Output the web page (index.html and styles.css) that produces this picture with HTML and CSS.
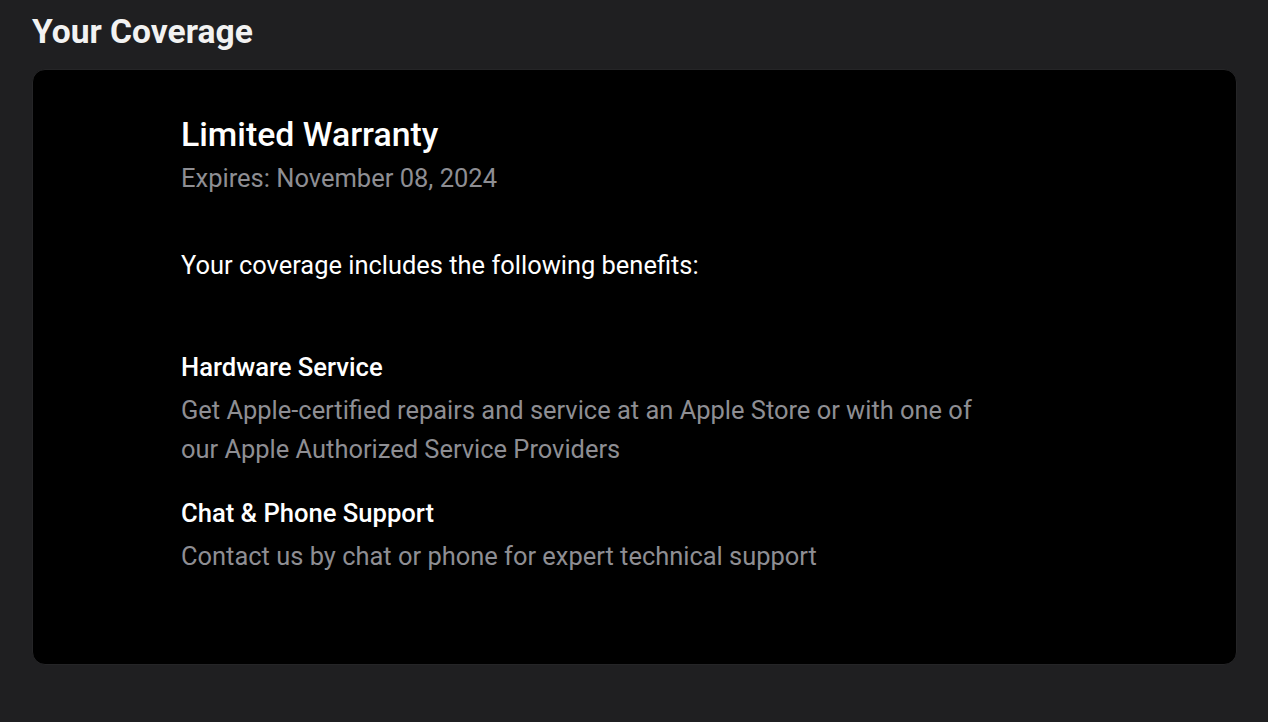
FILE: index.html
```html
<!DOCTYPE html>
<html lang="en">
<head>
<meta charset="utf-8">
<title>Your Coverage</title>
<link rel="stylesheet" href="styles.css">
</head>
<body>
<main class="page">
  <h1 class="page-title">Your Coverage</h1>
  <section class="card">
    <h2 class="plan-name">Limited Warranty</h2>
    <p class="plan-expiry">Expires: November 08, 2024</p>
    <p class="intro">Your coverage includes the following benefits:</p>
    <div class="benefits">
      <div class="benefit">
        <h3 class="benefit-title">Hardware Service</h3>
        <p class="benefit-desc">Get Apple-certified repairs and service at an Apple Store or with one of our Apple Authorized Service Providers</p>
      </div>
      <div class="benefit">
        <h3 class="benefit-title">Chat &amp; Phone Support</h3>
        <p class="benefit-desc">Contact us by chat or phone for expert technical support</p>
      </div>
    </div>
  </section>
</main>
</body>
</html>
```
FILE: styles.css
```css
html, body {
  margin: 0;
  padding: 0;
  background: #1f1f21;
}
body {
  font-family: Roboto, "Liberation Sans", sans-serif;
  color: #ffffff;
}
.page {
  padding: 12px 31px 0 32px;
}
.page-title {
  margin: 0;
  font-size: 33.6px;
  font-weight: 700;
  line-height: 40px;
  color: #f2f2f2;
}
.card {
  margin-top: 17px;
  height: 596px;
  box-sizing: border-box;
  background: #000000;
  border: 1px solid #252527;
  border-radius: 13px;
  padding: 45px 40px 0 148px;
}
.plan-name {
  margin: 0;
  font-size: 33.8px;
  font-weight: 500;
  line-height: 40px;
  color: #ffffff;
}
.plan-expiry {
  margin: 3px 0 0;
  font-size: 25.5px;
  line-height: 40px;
  color: #8e8e93;
}
.intro {
  margin: 47px 0 0;
  font-size: 25.45px;
  line-height: 40px;
  color: #ffffff;
}
.benefits {
  margin-top: 62px;
  display: flex;
  flex-direction: column;
  gap: 24px;
}
.benefit-title {
  margin: 0;
  font-size: 25.6px;
  font-weight: 500;
  line-height: 41px;
  color: #ffffff;
}
.benefit-desc {
  margin: 3px 0 0;
  max-width: 810px;
  font-size: 25.45px;
  line-height: 39px;
  color: #8e8e93;
}
```
